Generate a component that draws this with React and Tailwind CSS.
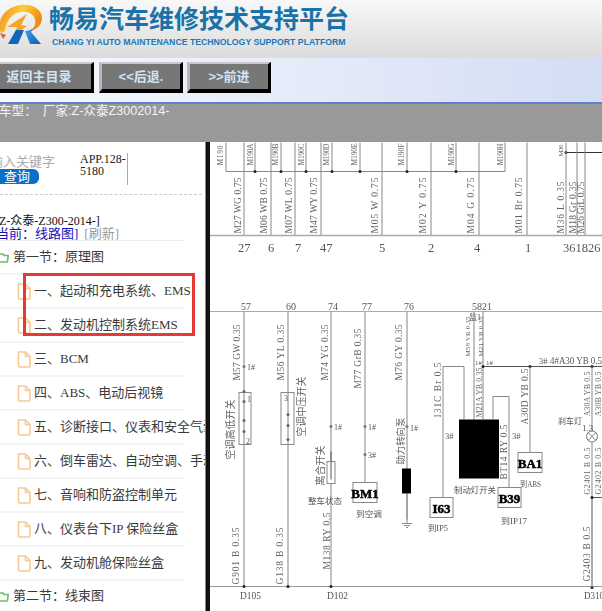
const SERIF = { fontFamily: '"Liberation Serif","Noto Sans CJK SC",serif' };
const SANS = { fontFamily: '"Liberation Sans","Noto Sans CJK SC",sans-serif' };
const rows = ['一、起动和充电系统、EMS','二、发动机控制系统EMS','三、BCM','四、ABS、电动后视镜','五、诊断接口、仪表和安全气囊','六、倒车雷达、自动空调、手动空调','七、音响和防盗控制单元','八、仪表台下IP 保险丝盒','九、发动机舱保险丝盒'];

function FileIcon() {
  return <svg width="14" height="17" viewBox="0 0 14 17" className="shrink-0" fill="#fff" stroke="#f6c998" strokeWidth="1.6"><path d="M1.5 1h7l4.5 4.5V15a1 1 0 0 1-1 1H2.500a1 1 0 0 1-1-1z"/><path d="M8.500 1v4.500H13" fill="none"/></svg>;
}
function FolderIcon() {
  return <svg width="9" height="11" viewBox="0 0 9 11" className="shrink-0" fill="none" stroke="#6ebd6e" strokeWidth="1.700"><path d="M0 2h3l1 1.500h4.200l-.7 5.500a1 1 0 0 1-1 1H0" /></svg>;
}
function Logo() {
  return (
    <svg width="44" height="44" viewBox="0 0 44 44" className="shrink-0">
      <defs>
        <linearGradient id="sw" x1="0" y1="0" x2="1" y2=".3"><stop offset="0" stopColor="#f0891d"/><stop offset=".55" stopColor="#fcd034"/><stop offset="1" stopColor="#f08a1a"/></linearGradient>
        <linearGradient id="rb" x1="0" y1="0" x2="1" y2="1"><stop offset="0" stopColor="#46a3ea"/><stop offset="1" stopColor="#0a5cb4"/></linearGradient>
      </defs>
      <path d="M2 32C-3 20 5 6 22 4c12-1.500 21 5 21 13 0 7-5 11-11 13 3-3 5-7 4-11-1-6-7-9-14-8C13 12 7 20 6 30z" fill="url(#sw)"/>
      <path d="M8 26l20-13-6 11 6 1-13 9 3-8z" fill="#f5a623"/>
      <path d="M1 32l6 2-3 4z" fill="#e8603a"/>
      <path d="M17 29h8l-6 14H9z" fill="#0f66bb"/>
      <path d="M26 30c3 0 8-2 10-4l-4 5 10 12H31z" fill="url(#rb)"/>
    </svg>
  );
}

const V = ({ x, y, len, t, s = 9.500, c = '#666' }) => (
  <text x={x} y={y} fontSize={s} fill={c} textLength={len} lengthAdjust="spacing" transform={`rotate(-90 ${x} ${y})`} style={SERIF}>{t}</text>
);
const T = ({ x, y, t, s = 11, c = '#555', w }) => (
  <text x={x} y={y} fontSize={s} fill={c} textLength={w} lengthAdjust={w ? 'spacingAndGlyphs' : undefined} style={SERIF}>{t}</text>
);
const L = ({ d, w = 1, c = '#888' }) => <path d={d} stroke={c} strokeWidth={w} fill="none" />;
const Dot = ({ x, y, r = 1.500, c = '#222' }) => <circle cx={x} cy={y} r={r} fill={c} />;
const Tag = ({ x, y, w, h, t }) => (
  <g>
    <rect x={x} y={y} width={w} height={h} fill="#fff" stroke="#888" />
    <text x={x + w / 2} y={y + h - 5} textAnchor="middle" fontSize="13" fontWeight="700" fill="#000" stroke="#000" strokeWidth=".5" style={SERIF}>{t}</text>
  </g>
);

function Diagram() {
  const top = [[221,'M190',20],[251,'M190A',22],[276,'M190B',22],[302,'M190C',22],[327,'M190D',22],[355,'M190E',22],[402,'M190F',22],[452,'M190G',22],[501,'M190H',22]];
  const vt = [226,255,281,306,332,360,407,456,505];
  const main = [244,271,295,321,382,431,479,527,566,577,585];
  const wl = [[241,'M27 WG 0.75',56],[267,'M06 WB 0.75',56],[292,'M07 WL 0.75',56],[317,'M47 WY 0.75',56],[378,'M05 W 0.75',56],[426,'M02 Y 0.75',56],[474,'M04 G 0.75',56],[522,'M01 Br 0.75',56],[564,'M36 L 0.35',52],[576,'M18 Gr 0.35',52],[584,'M26 GrL 0.75',52]];
  const nums = [[238,'27'],[268,'6'],[295,'7'],[320,'47'],[379,'5'],[428,'2'],[474,'4'],[525,'1'],[563,'361826']];
  const nums2 = [[241,'57'],[286,'60'],[328,'74'],[362,'77'],[404,'76'],[472,'58'],[482,'21']];
  return (
    <svg viewBox="210 143 392 468" className="block h-full w-full blur-[0.4px]">
      {vt.map(x => <L key={x} d={`M${x} 143V172`} />)}
      <L d="M226 172H505" />
      {vt.slice(1, -1).map(x => <Dot key={x} x={x} y={172} />)}
      {top.map(([x, t, l]) => <V key={t} x={x + 2} y={166} len={l} t={t} s={7.500} />)}
      <Dot x={566} y={153} /><L d="M566 153H602" c="#333" />
      <V x={563} y={157} len={12} t="M36" s={7} />
      {main.map(x => <L key={x} d={`M${x} 143V236`} />)}
      {wl.map(([x, t, l]) => <V key={t} x={x} y={234} len={l} t={t} />)}
      <L d="M210 236H602" w={1.500} c="#aaa" />
      {nums.map(([x, t]) => <T key={t} x={x} y={252} t={t} s={12.500} />)}

      <L d="M210 312H602" w={1} c="#aaa" />
      {nums2.map(([x, t]) => <T key={t} x={x} y={310} t={t} s={10} />)}
      <T x={469} y={320} t="监1" s={8} />

      <L d="M244 312V587M288 312V587M331 312V587M365 312V483M407 312V520" w={1.200} c="#999" />
      <V x={240} y={381} len={56} t="M57 GW 0.35" />
      <V x={284} y={381} len={56} t="M56 YL 0.35" />
      <V x={328} y={381} len={56} t="M74 YG 0.35" />
      <V x={361} y={389} len={60} t="M77 GrB 0.35" />
      <V x={402} y={381} len={56} t="M76 GY 0.35" />
      <Dot x={244} y={367} c="#777" /><T x={247} y={370} t="1#" s={8} />
      <rect x={239} y={393} width={12} height={52} fill="none" stroke="#888" />
      <T x={247} y={402} t="1" s={8} /><T x={246} y={444} t="2" s={8} />
      {[402,421,432].map(y => <Dot key={y} x={244} y={y} c="#666" />)}
      <Dot x={244} y={392} c="#666" />
      <rect x={281} y={393} width={13} height={52} fill="none" stroke="#888" />
      <Dot x={288} y={415} c="#666" /><Dot x={288} y={426} c="#666" /><Dot x={288} y={440} c="#666" />
      <T x={284} y={401} t="3" s={8} />
      <V x={234} y={460} len={60} t="空调高低开关" s={10} />
      <V x={305} y={437} len={60} t="空调中压开关" s={10} />
      <Dot x={331} y={427} c="#777" /><T x={334} y={430} t="1#" s={8} />
      <rect x={327} y={462} width={8} height={22} fill="#fff" stroke="#888" />
      <L d="M331 452V480" c="#555" />
      <V x={324} y={486} len={40} t="离合开关" s={10} />
      <T x={308} y={504} t="整车状态" s={8.500} w={34} />
      <V x={330} y={570} len={57} t="M138 RY 0.5" />
      <Dot x={365} y={427} c="#777" /><T x={368} y={430} t="1#" s={8} />
      <Dot x={365} y={455} c="#777" /><T x={368} y={458} t="3#" s={8} />
      <Tag x={353} y={483} w={24} h={20} t="BM1" />
      <T x={356} y={517} t="到空调" s={8.500} w={26} />
      <V x={404} y={465} len={47} t="助力转向泵" s={9.500} />
      <rect x={402} y={469} width={9} height={25} fill="#000" />
      <Dot x={407} y={427} c="#777" /><T x={410} y={431} t="1#" s={8} />
      <L d="M407 494V524M402 524H412M404 526H410M406 528H408" c="#888" />
      <V x={239} y={585} len={57} t="G901 B 0.35" />
      <V x={283} y={585} len={57} t="G138 B 0.35" />
      <L d="M210 587H602" w={1.200} c="#999" />
      <Dot x={244} y={587} /><Dot x={288} y={587} /><Dot x={331} y={587} /><Dot x={592} y={588} />
      <T x={240} y={599} t="D105" s={11} w={21} />
      <T x={327} y={599} t="D102" s={11} w={21} />
      <T x={584} y={599} t="D310" s={11} w={20} />

      <L d="M474 312V420M483 312V420" w={1.200} c="#999" />
      <V x={470} y={357} len={40} t="M58 YR 0.35" s={7} />
      <V x={483} y={357} len={40} t="M21 YB 0.35" s={7} />
      <V x={482} y={418} len={50} t="M21A YB 0.35" s={8} />
      <T x={475} y={365} t="1#" s={7} /><T x={486} y={365} t="1#" s={7} />
      <L d="M483 367H602" c="#555" />
      <Dot x={483} y={367} /><Dot x={530} y={367} /><Dot x={592} y={367} />
      <T x={539} y={364} t="3#" s={8.500} /><T x={550} y={364} t="4#A30 YB 0.5" s={9.500} w={52} />
      <V x={528} y={425} len={56} t="A30D YB 0.5" />
      <L d="M530 367V453" />
      <Tag x={518} y={453} w={24} h={20} t="BA1" />
      <T x={520} y={487} t="到ABS" s={8.500} w={21} />
      <L d="M443 367V498M443 367H464V420" />
      <V x={441} y={418} len={55} t="I31C Br 0.5" />
      <T x={445} y={439} t="3#" s={8.500} />
      <Tag x={430} y={498} w={23} h={20} t="I63" />
      <T x={428} y={531} t="到IP5" s={8.500} w={20} />
      <rect x={459} y={420} width={40} height={59} fill="#000" />
      <T x={454} y={493} t="制动灯开关" s={8.500} w={42} />
      <L d="M493 420V397H509V488" />
      <V x={507} y={480} len={55} t="BT14 RY 0.5" />
      <T x={512} y={439} t="3#" s={8.500} />
      <Tag x={498} y={488} w={23} h={20} t="B39" />
      <T x={501} y={524} t="到IP17" s={8.500} w={26} />
      <T x={558} y={424} t="刹车灯" s={8.500} w={24} />
      <L d="M592 367V431M592 443V498" />
      <L d="M592 498V587" w={2} c="#aaa" />
      <L d="M592 498H602" c="#555" /><Dot x={592} y={498} />
      <V x={590} y={417} len={45} t="A30A YB 0.5" s={8} />
      <V x={601} y={417} len={45} t="A30B YB 0.5" s={8} />
      <circle cx={592} cy={437} r={5.500} fill="#fff" stroke="#777" />
      <L d="M588 433L596 441M596 433L588 441" c="#777" />
      <T x={582} y={431} t="1.3" s={9} />
      <V x={590} y={495} len={47} t="G2401 B 0.5" s={8} />
      <V x={601} y={495} len={47} t="G2402 B 0.5" s={8} />
      <V x={590} y={582} len={55} t="G2403 B 0.5" />
    </svg>
  );
}

export default function App() {
  return (
    <div className="relative flex h-[611px] w-[602px] flex-col overflow-hidden bg-white" style={SANS}>
      <header className="flex h-[58px] shrink-0 overflow-hidden bg-gradient-to-b from-[#f8f8f8] to-[#dcdcdc]">
        <div className="mt-[1px] -ml-px"><Logo /></div>
        <div className="ml-[6px] flex flex-col pt-[4px]">
          <div className="text-[25px] leading-[31px] font-bold whitespace-nowrap text-[#1a72a8]">畅易汽车维修技术支持平台</div>
          <div className="mt-[2px] ml-[3px] text-[8.700px] leading-[10px] font-bold whitespace-nowrap text-[#1a78b8]">CHANG YI AUTO MAINTENANCE TECHNOLOGY SUPPORT PLATFORM</div>
        </div>
      </header>
      <nav className="flex h-[44px] shrink-0 gap-[4px] bg-gradient-to-r from-[#f7f9fd] to-[#d3ddf4] pt-[4px]">
        {[['返回主目录', '-ml-[16px] mr-[1px] w-[110px]'], ['<<后退.', 'w-[84px]'], ['>>前进', 'w-[84px]']].map(([t, c]) => (
          <div key={t} className={`flex h-[31px] items-center justify-center border-t-[2px] border-r-[3px] border-b-[4px] border-l-[3px] border-t-[#c8c8c8] border-r-black border-b-black border-l-[#b8b8b8] bg-[#777777] text-[13px] font-bold text-[#cfe3f5] ${c}`}>{t}</div>
        ))}
      </nav>
      <div className="flex h-[40px] shrink-0 items-start border-t-[2px] border-t-[#5f7fcf] bg-[#999999] text-[12.600px] leading-[15px] whitespace-nowrap text-[#f4f4f4]">
        <span className="-ml-px">车型：</span><span className="ml-[6px]">厂家:Z-众泰Z3002014-</span>
      </div>
      <div className="flex min-h-0 flex-1">
        <aside className="relative w-[206px] shrink-0 overflow-hidden border-r border-r-[#888888] text-[13px] leading-[14px] text-[#3a3a3a]" style={SERIF}>
          <div className="mr-[3px] flex h-[53px] border-b border-dashed border-b-[#cccccc] pt-[11px]">
            <div className="w-[80px] shrink-0">
              <div className="mt-[2px] -ml-[10px] whitespace-nowrap text-[#aaaaaa]">输入关键字</div>
              <div className="-ml-[4px] h-[15px] w-[43px] rounded-r-[6px] bg-[#0a6fc9] pl-[8px] text-[13px] leading-[15px] text-white">查询</div>
            </div>
            <div className="h-[32px] w-[48px] border-r border-r-[#aaaaaa] text-[12px] leading-[12px] text-[#222]">APP.128-5180</div>
          </div>
          <div className="mt-[20px] -ml-[1px] whitespace-nowrap text-[12px] leading-[12px] text-[#111]">Z-众泰-Z300-2014-]</div>
          <div className="-ml-[4px] h-[12px] whitespace-nowrap text-[13px] leading-[13px]">
            <span className="text-[#1111bb]">当前：线路图]</span><span className="ml-[6px] text-[#999999]">[刷新]</span>
          </div>
          <div className="mt-[1px] h-px w-[184px] bg-[#eeeeee]" />
          <div className="flex h-[34px] w-[184px] items-center gap-[4px] border-b-[2px] border-b-[#f3f3f3]">
            <FolderIcon /><span className="whitespace-nowrap">第一节：原理图</span>
          </div>
          {rows.map(t => (
            <div key={t} className="flex h-[34px] w-[184px] items-center gap-[3px] border-b-[2px] border-b-[#f3f3f3] pl-[17px]">
              <FileIcon /><span className="whitespace-nowrap">{t}</span>
            </div>
          ))}
          <div className="flex h-[30px] w-[184px] items-center gap-[4px]">
            <FolderIcon /><span className="whitespace-nowrap">第二节：线束图</span>
          </div>
          <div className="absolute top-[131px] left-[23px] h-[63px] w-[172px] border-[3px] border-[#e53935]" />
        </aside>
        <main className="min-w-0 flex-1 border-l-[4px] border-l-[#111111]">
          <Diagram />
        </main>
      </div>
    </div>
  );
}
